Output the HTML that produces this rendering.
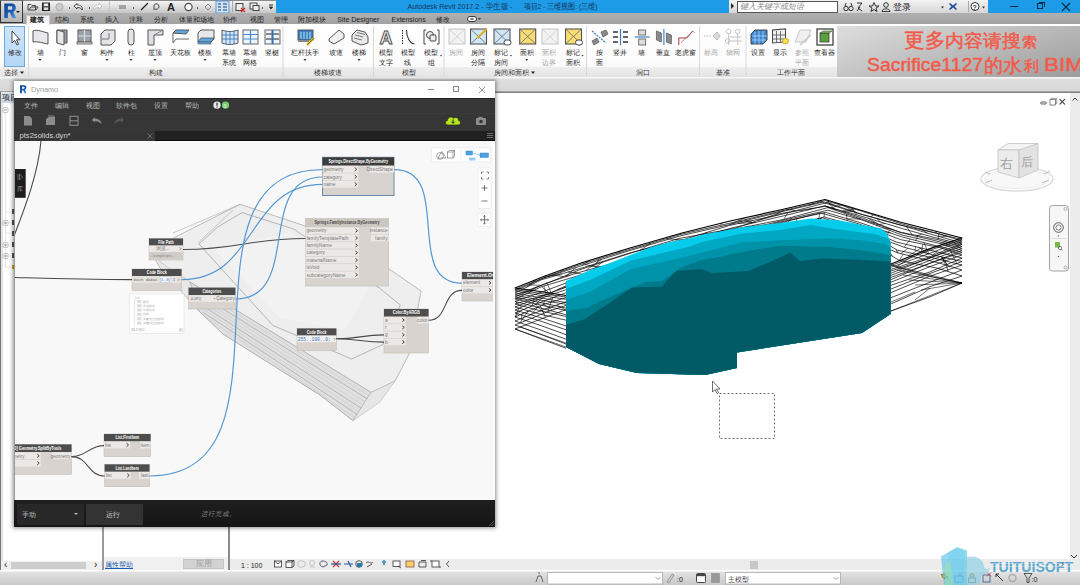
<!DOCTYPE html>
<html><head><meta charset="utf-8">
<style>
*{margin:0;padding:0;box-sizing:border-box}
html,body{width:1080px;height:585px;overflow:hidden;background:#fff;font-family:"Liberation Sans",sans-serif;color:#222}
.a{position:absolute}
.t{position:absolute;white-space:nowrap;line-height:1}
#qat{left:0;top:0;width:276px;height:13px;background:linear-gradient(#8a8a8a 0,#8a8a8a 1px,#f4f4f4 1px,#dedede 55%,#c6c6c6)}
#title{left:276px;top:0;width:804px;height:13px;background:#1e9be6}
#tabs{left:0;top:13px;width:1080px;height:11px;background:linear-gradient(#b0b0b0,#a2a2a2)}
#ribbon{left:0;top:24px;width:1080px;height:53px;background:linear-gradient(#ffffff,#fcfcfc 70%,#f4f4f4)}
#ptitle{left:0;top:67px;width:837px;height:10px;background:linear-gradient(#eeeeee,#e4e4e4)}
#strip{left:0;top:77px;width:1080px;height:16px;background:linear-gradient(#f7f7f7 0,#f7f7f7 1px,#dedede 2px,#d8d8d8 14px,#707070 15px,#909090 16px)}
#status{left:0;top:570px;width:1080px;height:15px;background:linear-gradient(#f0f0f0 0,#f0f0f0 1px,#d8d8d8 2px,#cdcdcd)}
.cjk{font-family:"Liberation Sans",sans-serif}
</style></head><body>
<div class="a" id="qat"></div>
<div class="a" id="title"></div>
<!-- QAT icons -->
<svg class="a" style="left:24px;top:0" width="252" height="13" viewBox="24 0 252 13">
 <g fill="none" stroke="#333" stroke-width="1">
  <path d="M28,4.5 L31,4.5 L32,5.5 L35.5,5.5 L35.5,10 L28,10 Z M29,10 L31,7 L38,7 L36,10" stroke="#444"/>
  <rect x="42.5" y="3" width="7" height="7.5" fill="#555" stroke="#222"/>
  <rect x="44" y="3.5" width="4" height="2.5" fill="#eee" stroke="none"/>
  <rect x="44" y="7.5" width="4" height="2.5" fill="#ddd" stroke="none"/>
  <circle cx="59.5" cy="7" r="3.6" fill="#ccc" stroke="#aaa"/>
  <path d="M69,8 L70,8" stroke="#333" stroke-width="1.4"/>
  <path d="M74,6 L77,3.5 L77,5 C81,5 83,7 82,10 C81,8 80,7.5 77,7.5 L77,9 Z" stroke="#333" fill="#fff" stroke-width="0.9"/>
  <path d="M89,8 L90,8" stroke="#333" stroke-width="1.4"/>
  <path d="M102,6 L99,3.5 L99,5 C95,5 93,7 94,10 C95,8 96,7.5 99,7.5 L99,9 Z" stroke="#bbb" fill="#fff" stroke-width="0.9"/>
  <path d="M109,8 L110,8" stroke="#555" stroke-width="1.4"/>
  <path d="M119,6 L126,6 M119,8 L126,8" stroke="#666" stroke-width="1.2"/>
  <path d="M133,8 L134,8" stroke="#333" stroke-width="1.4"/>
  <path d="M141,10 L148,3" stroke="#222" stroke-width="1.3"/>
  <path d="M154,10 L154,6 C154,3 159,3 159,6.5 C159,9 156,10 155,9" stroke="#444"/>
  <text x="167" y="11" font-family="Liberation Sans" font-weight="bold" font-size="11" fill="#222" stroke="none">A</text>
  <circle cx="188.5" cy="7" r="3.6" fill="#fff" stroke="#444" stroke-width="1.1"/>
  <path d="M197,8 L198,8" stroke="#333" stroke-width="1.4"/>
  <path d="M205,7 L208,4 L211,7 L208,10 Z" stroke="#888"/>
  <rect x="216" y="1" width="13" height="12" fill="#cfe3f7" stroke="#5a9ad8"/>
  <path d="M218,4 L221,4 M223,4 L227,4 M218,7 L221,7 M223,7 L227,7 M218,10 L221,10 M223,10 L227,10" stroke="#1f3f66" stroke-width="1.2"/>
  <rect x="236" y="3.5" width="7" height="7" fill="#eee" stroke="#444"/>
  <path d="M241,8 L245,12 M245,8 L241,12" stroke="#d22" stroke-width="1.2"/>
  <rect x="250" y="3" width="7" height="6" fill="#eee" stroke="#444"/>
  <rect x="253" y="5.5" width="6" height="5" fill="#eee" stroke="#444"/>
  <path d="M262,8 L263,8" stroke="#333" stroke-width="1.4"/>
  <path d="M269,5 L273,5 M269.5,7 L272.5,7 L271,9 Z" stroke="#333" fill="#333"/>
 </g>
</svg>
<div class="a" style="left:232px;top:1px;width:1px;height:11px;background:#aaa"></div>
<div class="a" style="left:109px;top:1px;width:1px;height:11px;background:#c8c8c8"></div>
<!-- title -->
<svg class="a" style="left:400px;top:0" width="200" height="13" viewBox="400 0 200 13"><g fill="#16355f" font-size="7.6" font-family="Liberation Sans"><text x="407.5" y="9.2" textLength="105" lengthAdjust="spacingAndGlyphs">Autodesk Revit 2017.2 - 学生版 -</text><text x="523.5" y="9.2" textLength="74" lengthAdjust="spacingAndGlyphs">项目2 - 三维视图: (三维)</text></g></svg>
<!-- search area -->
<div class="a" style="left:729px;top:0;width:259px;height:13px;background:linear-gradient(#f3f3f3,#d6d6d6)"></div>
<div class="a" style="left:731px;top:3px;width:0;height:0;border-top:3px solid transparent;border-bottom:3px solid transparent;border-left:3px solid #222"></div>
<div class="a" style="left:737px;top:1px;width:101px;height:11.5px;background:#fff;border:1px solid #555"></div>
<div class="t" style="left:740px;top:2.5px;font-size:8px;color:#888;font-style:italic">键入关键字或短语</div>
<svg class="a" style="left:840px;top:0" width="148" height="13" viewBox="840 0 148 13">
 <g fill="none" stroke="#333" stroke-width="1">
  <circle cx="846" cy="8.5" r="2.2"/><circle cx="851" cy="8.5" r="2.2"/><path d="M845,6 L846,3 M852,6 L851,3"/>
  <path d="M857,3 L862,3 L858,8 L862,11 M857,11 L860,7"/>
  <path d="M874,2.5 L875.5,6 L879,6 L876,8 L877,11.5 L874,9.5 L871,11.5 L872,8 L869,6 L872.5,6 Z"/>
  <circle cx="886" cy="5" r="2.3"/><path d="M882,11.5 C882,8 890,8 890,11.5 Z"/>
 </g>
 <text x="893" y="10" font-size="8.5" fill="#222" font-family="Liberation Sans">登录</text>
 <path d="M941,6.5 L944,6.5 L942.5,8.5 Z" fill="#333"/>
 <path d="M950,3 L953,5.5 L956,3 L957,4 L954.5,6.5 L957,9 L956,10 L953,7.5 L950,10 L949,9 L951.5,6.5 L949,4 Z" fill="#1c4f9c"/>
 <path d="M968.5,1 L968.5,12" stroke="#aaa"/>
 <circle cx="975" cy="6.5" r="4" fill="#fff" stroke="#333"/>
 <text x="972.5" y="9.5" font-size="7" font-weight="bold" fill="#333" font-family="Liberation Sans">?</text>
 <path d="M982,6.5 L985,6.5 L983.5,8.5 Z" fill="#333"/>
</svg>
<!-- window controls -->
<div class="a" style="left:1010px;top:6px;width:8px;height:1px;background:#0c2a44"></div>
<div class="a" style="left:1037px;top:3px;width:6px;height:6px;border:1px solid #0c2a44"></div>
<div class="a" style="left:1039px;top:2px;width:6px;height:5px;border-top:1px solid #0c2a44;border-right:1px solid #0c2a44"></div>
<svg class="a" style="left:1061px;top:2px" width="10" height="10"><path d="M1,1 L9,9 M9,1 L1,9" stroke="#0c2a44" stroke-width="1.1"/></svg>
<div class="a" id="tabs"></div>
<div class="a" style="left:26px;top:14.5px;width:24px;height:10.5px;background:linear-gradient(#eeeeee,#fdfdfd);border:1px solid #c4c4c4;border-bottom:none;z-index:2"></div>
<svg class="a" style="left:0;top:13px;z-index:3" width="500" height="12" viewBox="0 13 500 12">
<text x="37" y="22" font-size="7" fill="#1e1e1e" text-anchor="middle" font-weight="bold">建筑</text>
<text x="61.7" y="22" font-size="7" fill="#1e1e1e" text-anchor="middle">结构</text>
<text x="86.5" y="22" font-size="7" fill="#1e1e1e" text-anchor="middle">系统</text>
<text x="111.7" y="22" font-size="7" fill="#1e1e1e" text-anchor="middle">插入</text>
<text x="136" y="22" font-size="7" fill="#1e1e1e" text-anchor="middle">注释</text>
<text x="160.7" y="22" font-size="7" fill="#1e1e1e" text-anchor="middle">分析</text>
<text x="196" y="22" font-size="7" fill="#1e1e1e" text-anchor="middle">体量和场地</text>
<text x="229.5" y="22" font-size="7" fill="#1e1e1e" text-anchor="middle">协作</text>
<text x="256.5" y="22" font-size="7" fill="#1e1e1e" text-anchor="middle">视图</text>
<text x="280.7" y="22" font-size="7" fill="#1e1e1e" text-anchor="middle">管理</text>
<text x="312.2" y="22" font-size="7" fill="#1e1e1e" text-anchor="middle">附加模块</text>
<text x="358.3" y="22" font-size="7" fill="#1e1e1e" text-anchor="middle">Site Designer</text>
<text x="408.6" y="22" font-size="7" fill="#1e1e1e" text-anchor="middle">Extensions</text>
<text x="443.3" y="22" font-size="7" fill="#1e1e1e" text-anchor="middle">修改</text>
<rect x="467.5" y="16.5" width="9" height="5" rx="2.5" fill="#fff" stroke="#333"/><rect x="470.5" y="18.3" width="3" height="1.4" fill="#333"/><path d="M478,18 L481,18 L479.5,20 Z" fill="#333"/>
</svg>
<div class="a" id="ribbon"></div>
<div class="a" id="ptitle"></div>
<div class="a" style="left:4px;top:26px;width:21px;height:41px;background:linear-gradient(#cfe5fa,#b5d6f5);border:1px solid #6fa8dc"></div>
<svg class="a" style="left:0;top:24px" width="30" height="44" viewBox="0 24 30 44"><path d="M12,31 L12,43 L14.8,40.5 L17,45 L18.5,44.3 L16.5,39.8 L20,39.8 Z" fill="#fff" stroke="#333" stroke-width=".9"/><text x="14.5" y="55" font-size="7" fill="#333" text-anchor="middle">修改</text></svg>
<svg class="a" style="left:0;top:24px" width="840" height="53" viewBox="0 24 840 53">
<path d="M33,31 C37,29 43,32 48,33 L48,44 C43,43 37,41 33,42 Z" fill="#e8e8ea" stroke="#555" stroke-width="1"/>
<text x="40" y="55" font-size="7" fill="#282828" text-anchor="middle">墙</text>
<path d="M38.5,59 L41.5,59 L40,61 Z" fill="#333"/>
<path d="M57,30 L67,30 L67,43 L57,43 Z" fill="#9a9aa0" stroke="#555"/><path d="M57,30 L64,32 L64,45 L57,43 Z" fill="#e8e8ea" stroke="#555"/>
<text x="62" y="55" font-size="7" fill="#282828" text-anchor="middle">门</text>
<rect x="78" y="30" width="13" height="12" fill="#9aa2ae" stroke="#555"/><path d="M84.5,30 L84.5,42 M78,36 L91,36" stroke="#ddd" stroke-width="1.2"/><rect x="77" y="42" width="15" height="2" fill="#ddd" stroke="#555" stroke-width=".8"/>
<text x="84" y="55" font-size="7" fill="#282828" text-anchor="middle">窗</text>
<path d="M101,34 L105,30 L115,30 L115,41 L111,45 L101,45 Z" fill="#e4e4e8" stroke="#555"/><path d="M102,39 L109,39 L109,33" fill="none" stroke="#777"/>
<text x="107" y="55" font-size="7" fill="#282828" text-anchor="middle">构件</text>
<path d="M105.5,59 L108.5,59 L107,61 Z" fill="#333"/>
<rect x="128" y="29" width="6" height="16" rx="3" fill="#e4e4e8" stroke="#555"/>
<text x="131" y="55" font-size="7" fill="#282828" text-anchor="middle">柱</text>
<path d="M129.5,59 L132.5,59 L131,61 Z" fill="#333"/>
<path d="M148,30 L163,30 L163,35 L154,35 L154,45 L148,45 Z" fill="#e0e0e4" stroke="#555"/><path d="M163,30 L154,35" stroke="#888"/>
<text x="155" y="55" font-size="7" fill="#282828" text-anchor="middle">屋顶</text>
<path d="M153.5,59 L156.5,59 L155,61 Z" fill="#333"/>
<path d="M173,33 L176,30 L189,30 L186,34 Z" fill="#5aa9e6" stroke="#555"/><path d="M173,33 L173,43 M173,43 L176,39 L189,39" fill="none" stroke="#666"/>
<text x="180" y="55" font-size="7" fill="#282828" text-anchor="middle">天花板</text>
<path d="M198,33 L201,30 L214,30 L214,39 L211,42 L198,42 Z" fill="#e8e8ea" stroke="#555"/><path d="M198,42 L201,38 L214,38 L211,42 Z" fill="#5aa9e6" stroke="#555" stroke-width=".8"/><rect x="198" y="42" width="13" height="2" fill="#5aa9e6" stroke="#555" stroke-width=".6"/>
<text x="205" y="55" font-size="7" fill="#282828" text-anchor="middle">楼板</text>
<path d="M203.5,59 L206.5,59 L205,61 Z" fill="#333"/>
<path d="M222,30 C227,32 232,32 238,30 L238,43 C232,45 227,45 222,43 Z" fill="#d6e6f6" stroke="#555"/><path d="M226,31 L226,44 M230,31.5 L230,44.5 M234,31 L234,44 M222,35 L238,35 M222,39 L238,39" stroke="#2f6fb0" stroke-width=".8"/>
<text x="229" y="55" font-size="7" fill="#282828" text-anchor="middle">幕墙</text>
<text x="229" y="65" font-size="7" fill="#282828" text-anchor="middle">系统</text>
<rect x="243" y="30" width="15" height="14" fill="#eef4fa" stroke="#666"/><path d="M250.5,30 L250.5,44 M243,34.5 L258,34.5 M243,39 L258,39" stroke="#4a8ad0" stroke-width="1.2"/>
<text x="250" y="55" font-size="7" fill="#282828" text-anchor="middle">幕墙</text>
<text x="250" y="65" font-size="7" fill="#282828" text-anchor="middle">网格</text>
<rect x="265" y="30" width="15" height="14" fill="#eef4fa" stroke="#666"/><path d="M266,34 L279,34 M266,39 L279,39" stroke="#666" stroke-width="1.3"/><path d="M272.5,30 L272.5,44" stroke="#2f6fb0" stroke-width="2"/>
<text x="272" y="55" font-size="7" fill="#282828" text-anchor="middle">竖梃</text>
<rect x="298" y="30" width="15" height="10" fill="#3d80c8" stroke="#555"/><path d="M301,32 L301,39 M304,32 L304,39 M307,32 L307,39 M310,32 L310,39" stroke="#cfe" stroke-width=".8"/><path d="M307,45 L314,38" stroke="#e8c020" stroke-width="2.4"/><path d="M307,45 L314,38" stroke="#333" stroke-width=".6"/><rect x="298" y="40" width="11" height="2" fill="#888"/>
<text x="305" y="55" font-size="7" fill="#282828" text-anchor="middle">栏杆扶手</text>
<path d="M303.5,59 L306.5,59 L305,61 Z" fill="#333"/>
<path d="M329,39 L339,30 L344,34 L344,38 L334,44 L329,41 Z" fill="#f0f0f2" stroke="#555"/>
<text x="336" y="55" font-size="7" fill="#282828" text-anchor="middle">坡道</text>
<path d="M352,35 L357,30 L365,32 L368,37 L368,43 L361,45 L352,41 Z" fill="#eaeaea" stroke="#555"/><path d="M355,35 L363,37 M357,32.5 L365,34.5 M354,38 L362,40" stroke="#777"/>
<text x="359" y="55" font-size="7" fill="#282828" text-anchor="middle">楼梯</text>
<path d="M357.5,59 L360.5,59 L359,61 Z" fill="#333"/>
<text x="386" y="44" font-size="18" font-weight="bold" text-anchor="middle" fill="#f4f4f4" stroke="#444" stroke-width=".9">A</text>
<text x="386" y="55" font-size="7" fill="#282828" text-anchor="middle">模型</text>
<text x="386" y="65" font-size="7" fill="#282828" text-anchor="middle">文字</text>
<path d="M402.5,30 L402.5,44" stroke="#333" stroke-width="1" stroke-dasharray="1.5,1"/><path d="M406.5,30 C406.5,37 409.5,43 414.5,44" fill="none" stroke="#333" stroke-width="1.1"/>
<text x="407.5" y="55" font-size="7" fill="#282828" text-anchor="middle">模型</text>
<text x="407.5" y="65" font-size="7" fill="#282828" text-anchor="middle">线</text>
<path d="M426,30 L424,30 L424,44 L426,44 M437,30 L439,30 L439,44 L437,44" fill="none" stroke="#444"/><circle cx="430" cy="35" r="3.5" fill="#eee" stroke="#444"/><rect x="430" y="35" width="6" height="6" rx="1" fill="#eee" stroke="#444"/>
<text x="431" y="55" font-size="7" fill="#282828" text-anchor="middle">模型</text>
<text x="431" y="65" font-size="7" fill="#282828" text-anchor="middle">组</text>
<path d="M440,55 L442,55 L441,56.5 Z" fill="#333"/>
<rect x="449" y="29" width="16" height="15" fill="#f2f2f2" stroke="#c8c8c8" stroke-width="1.1"/><path d="M449,29 L465,44 M465,29 L449,44" stroke="#ccc" stroke-width=".8"/>
<text x="456" y="55" font-size="7" fill="#a8a8a8" text-anchor="middle">房间</text>
<rect x="470.5" y="29" width="16" height="15" fill="#cfe6f7" stroke="#555" stroke-width="1.1"/><path d="M470.5,29 L486.5,44 M486.5,29 L470.5,44" stroke="#666" stroke-width=".8"/><path d="M477.5,38 L486.5,29" stroke="#e0b020" stroke-width="2.2"/>
<text x="477.5" y="55" font-size="7" fill="#282828" text-anchor="middle">房间</text>
<text x="477.5" y="65" font-size="7" fill="#282828" text-anchor="middle">分隔</text>
<rect x="494" y="29" width="16" height="15" fill="#cfe6f7" stroke="#555" stroke-width="1.1"/><path d="M494,29 L510,44 M510,29 L494,44" stroke="#666" stroke-width=".8"/><rect x="504" y="40" width="7" height="5" rx="2.5" fill="#fff" stroke="#444"/>
<text x="501" y="55" font-size="7" fill="#282828" text-anchor="middle">标记</text>
<text x="501" y="65" font-size="7" fill="#282828" text-anchor="middle">房间</text>
<path d="M510,55 L512,55 L511,56.5 Z" fill="#333"/>
<rect x="519.7" y="29" width="16" height="15" fill="#f8dc74" stroke="#555" stroke-width="1.1"/><path d="M519.7,29 L535.7,44 M535.7,29 L519.7,44" stroke="#666" stroke-width=".8"/>
<text x="526.7" y="55" font-size="7" fill="#282828" text-anchor="middle">面积</text>
<path d="M525.2,59 L528.2,59 L526.7,61 Z" fill="#333"/>
<rect x="542" y="29" width="16" height="15" fill="#f2f2f2" stroke="#c8c8c8" stroke-width="1.1"/><path d="M542,29 L558,44 M558,29 L542,44" stroke="#ccc" stroke-width=".8"/>
<text x="549" y="55" font-size="7" fill="#a8a8a8" text-anchor="middle">面积</text>
<text x="549" y="65" font-size="7" fill="#a8a8a8" text-anchor="middle">边界</text>
<rect x="565.5" y="29" width="16" height="15" fill="#f8dc74" stroke="#555" stroke-width="1.1"/><path d="M565.5,29 L581.5,44 M581.5,29 L565.5,44" stroke="#666" stroke-width=".8"/><rect x="575.5" y="40" width="7" height="5" rx="2.5" fill="#fff" stroke="#444"/>
<text x="572.5" y="55" font-size="7" fill="#282828" text-anchor="middle">标记</text>
<text x="572.5" y="65" font-size="7" fill="#282828" text-anchor="middle">面积</text>
<path d="M581.5,55 L583.5,55 L582.5,56.5 Z" fill="#333"/>
<path d="M592,31 L606,43" stroke="#3a7cc0" stroke-width="1.2" stroke-dasharray="2,1"/><path d="M601,32 L606,30 L608,34 L603,37 Z M592,41 L597,38 L599,42 L594,45 Z" fill="#8a8a8e" stroke="#555" stroke-width=".7"/>
<text x="599" y="55" font-size="7" fill="#282828" text-anchor="middle">按</text>
<text x="599" y="65" font-size="7" fill="#282828" text-anchor="middle">面</text>
<path d="M620.5,29 L620.5,45" stroke="#3a7cc0" stroke-width="1.2"/><path d="M613,32 L618,32 M613,37 L618,37 M613,42 L618,42 M623,32 L628,32 M623,37 L628,37 M623,42 L628,42" stroke="#666" stroke-width="2.2"/>
<text x="620" y="55" font-size="7" fill="#282828" text-anchor="middle">竖井</text>
<rect x="638.7" y="30" width="7" height="5" fill="#ddd" stroke="#555" stroke-width=".8"/><rect x="638.7" y="39" width="7" height="6" fill="#ddd" stroke="#555" stroke-width=".8"/><path d="M634.7,37 L649.7,37" stroke="#3a7cc0" stroke-width="1.2"/>
<text x="641.7" y="55" font-size="7" fill="#282828" text-anchor="middle">墙</text>
<path d="M656.4,31 L661.4,33 L661.4,42 L656.4,40 Z M666.4,33 L671.4,35 L671.4,44 L666.4,42 Z" fill="#8a8a90" stroke="#555" stroke-width=".7"/><path d="M663.9,29 L663.9,45" stroke="#3a7cc0" stroke-width="1.1"/>
<text x="663.4" y="55" font-size="7" fill="#282828" text-anchor="middle">垂直</text>
<path d="M678.8,45 L678.8,38 L686.8,38 L692.8,31" fill="none" stroke="#c03030" stroke-width="1"/><path d="M680.8,43 L692.8,31 L694.8,33" fill="none" stroke="#777" stroke-width=".8"/>
<text x="685.8" y="55" font-size="7" fill="#282828" text-anchor="middle">老虎窗</text>
<path d="M704,36 L711,36" stroke="#bbb" stroke-dasharray="1.5,1"/><path d="M713,36 L717,32 L720,36 L717,40 Z" fill="#ddd" stroke="#bbb"/>
<text x="711" y="55" font-size="7" fill="#a8a8a8" text-anchor="middle">标高</text>
<circle cx="728.7" cy="31.5" r="2.3" fill="none" stroke="#c4c4c4"/><circle cx="737.7" cy="31.5" r="2.3" fill="none" stroke="#c4c4c4"/><circle cx="727.7" cy="41" r="2.3" fill="none" stroke="#c4c4c4"/><path d="M728.7,34 L728.7,45 M737.7,34 L737.7,45 M729.7,37 L741.7,37 M729.7,41 L741.7,41" stroke="#c4c4c4"/>
<text x="732.7" y="55" font-size="7" fill="#a8a8a8" text-anchor="middle">轴网</text>
<path d="M751,34 L755,30 L767,30 L767,40 L763,44 L751,44 Z" fill="#3d86d0" stroke="#444"/><path d="M755,32 L755,44 M759,31 L759,44 M763,31 L763,43 M752,36 L767,36 M752,40 L766,40" stroke="#bfe0ff" stroke-width=".7"/>
<text x="758" y="55" font-size="7" fill="#282828" text-anchor="middle">设置</text>
<rect x="772.5" y="30" width="13" height="13" fill="#f0f0f0" stroke="#444" transform="skewY(-5)" transform-origin="772.5 30"/><path d="M776.5,31 L776.5,43 M780.5,31 L780.5,43 M772.5,35 L785.5,35 M772.5,39 L785.5,39" stroke="#555" stroke-width=".8"/><circle cx="785.5" cy="41" r="3" fill="#f8e050" stroke="#a08020" stroke-width=".6"/>
<text x="779.5" y="55" font-size="7" fill="#282828" text-anchor="middle">显示</text>
<path d="M795,42 L800,30 L811,30 L806,42 Z" fill="#f0f0f0" stroke="#c8c8c8"/><path d="M800,45 L811,35" stroke="#c8c8c8" stroke-width="1.6"/>
<text x="802" y="55" font-size="7" fill="#a8a8a8" text-anchor="middle">参照</text>
<text x="802" y="65" font-size="7" fill="#a8a8a8" text-anchor="middle">平面</text>
<rect x="817" y="29" width="16" height="16" fill="#fff" stroke="#444" stroke-width="1.3"/><rect x="820" y="33" width="9" height="9" fill="#5aa040" stroke="#333" stroke-width=".7"/><path d="M820,33 L823,31 L832,31 L829,33 Z" fill="#8ac060" stroke="#333" stroke-width=".5"/>
<text x="824" y="55" font-size="7" fill="#282828" text-anchor="middle">查看器</text>
<path d="M28.5,26 L28.5,77" stroke="#d8d8d8" stroke-width="1"/>
<path d="M283,26 L283,77" stroke="#d8d8d8" stroke-width="1"/>
<path d="M373.5,26 L373.5,77" stroke="#d8d8d8" stroke-width="1"/>
<path d="M444,26 L444,77" stroke="#d8d8d8" stroke-width="1"/>
<path d="M586.5,26 L586.5,77" stroke="#d8d8d8" stroke-width="1"/>
<path d="M699.5,26 L699.5,77" stroke="#d8d8d8" stroke-width="1"/>
<path d="M746,26 L746,77" stroke="#d8d8d8" stroke-width="1"/>
<text x="10.5" y="75" font-size="7" fill="#333" text-anchor="middle">选择</text>
<text x="156" y="75" font-size="7" fill="#333" text-anchor="middle">构建</text>
<text x="328" y="75" font-size="7" fill="#333" text-anchor="middle">楼梯坡道</text>
<text x="409" y="75" font-size="7" fill="#333" text-anchor="middle">模型</text>
<text x="511" y="75" font-size="7" fill="#333" text-anchor="middle">房间和面积</text>
<text x="643" y="75" font-size="7" fill="#333" text-anchor="middle">洞口</text>
<text x="723" y="75" font-size="7" fill="#333" text-anchor="middle">基准</text>
<text x="791" y="75" font-size="7" fill="#333" text-anchor="middle">工作平面</text>
<path d="M20,71.5 L24,71.5 L22,74 Z" fill="#222"/><path d="M531,71.5 L535,71.5 L533,74 Z" fill="#222"/>
</svg>
<div class="a" style="left:837px;top:26px;width:243px;height:51px;background:linear-gradient(100deg,#d8d8d8 0%,#c4c4c4 40%,#a9a9a9 100%)"></div>
<div class="a" style="left:837px;top:26px;width:243px;height:51px;background:linear-gradient(rgba(255,255,255,.15),rgba(0,0,0,.08))"></div>
<svg class="a" style="left:837px;top:24px" width="243" height="53" viewBox="837 24 243 53"><g fill="#f25a4a" stroke="#f25a4a" stroke-width=".45" font-family="Liberation Sans"><text x="904" y="46.5" font-size="20" textLength="41" lengthAdjust="spacingAndGlyphs">更多</text><text x="945" y="47" font-size="17.5" textLength="76" lengthAdjust="spacingAndGlyphs">内容请搜</text><text x="1022" y="46.5" font-size="14" textLength="15" lengthAdjust="spacingAndGlyphs">索</text><text x="867" y="71" font-size="17.5" textLength="116" lengthAdjust="spacingAndGlyphs">Sacrifice1127</text><text x="984" y="72" font-size="18.5" textLength="38" lengthAdjust="spacingAndGlyphs">的水</text><text x="1024" y="71" font-size="15" textLength="15" lengthAdjust="spacingAndGlyphs">利</text><text x="1044" y="71" font-size="18.5" textLength="40" lengthAdjust="spacingAndGlyphs">BIM</text></g></svg>
<div class="a" id="strip"></div>
<div class="a" style="left:0;top:0;width:23px;height:23px;background:linear-gradient(#e2e2e2,#b4b4b4);border:1px solid #333;border-top-color:#777;z-index:5"></div>
<svg class="a" style="left:0;top:0;z-index:6" width="23" height="23"><defs><linearGradient id="rg" x1="0" y1="0" x2="1" y2="1"><stop offset="0" stop-color="#0d3f8f"/><stop offset=".6" stop-color="#1f62b8"/><stop offset="1" stop-color="#5aa8e8"/></linearGradient></defs><path fill-rule="evenodd" fill="url(#rg)" d="M4.3,3.5 L11.5,3.5 C14.8,3.5 15.8,5.6 15.8,7.8 C15.8,10 14.8,11.3 13.2,11.9 L16.3,18 L12.4,18 L9.9,12.6 L7.9,12.6 L7.9,18 L4.3,18 Z M7.9,6.3 L11,6.3 C12,6.3 12.3,7 12.3,7.9 C12.3,8.8 12,9.7 11,9.7 L7.9,9.7 Z"/></svg>
<div class="a" style="left:16px;top:11px;width:0;height:0;border-left:2px solid transparent;border-right:2px solid transparent;border-top:2.5px solid #111;z-index:6"></div>
<!-- project browser -->
<div class="a" style="left:0;top:92px;width:103px;height:11px;background:linear-gradient(#dde6f0,#c9d6e6)"></div>
<div class="a" style="left:0;top:92px;width:1px;height:478px;background:#777"></div>
<div class="t" style="left:2px;top:93.5px;font-size:8px;color:#222">项目</div>
<div class="a" style="left:1px;top:103px;width:2px;height:458px;background:#e4e4e4"></div>
<svg class="a" style="left:0;top:100px" width="16" height="180" viewBox="0 100 16 180">
 <g fill="#fff" stroke="#999" stroke-width=".6">
  <rect x="3" y="107.5" width="5" height="5" rx="1.2"/><rect x="3" y="220.5" width="5" height="5" rx="1.2"/><rect x="3" y="242.5" width="5" height="5" rx="1.2"/><rect x="3" y="253.5" width="5" height="5" rx="1.2"/>
 </g>
 <path d="M4,110 L7,110 M4,223 L7,223 M5.5,221.5 L5.5,224.5 M4,245 L7,245 M5.5,243.5 L5.5,246.5 M4,256 L7,256 M5.5,254.5 L5.5,257.5" stroke="#555" stroke-width=".6"/>
 <path d="M5.5,113 L5.5,268 M8,223 L11,223 M8,245 L11,245 M8,256 L11,256 M5.5,212 L11,212 M5.5,233 L11,233 M5.5,267 L11,267" stroke="#ccc" stroke-width=".5" fill="none"/>
 <g fill="#555"><rect x="12" y="209" width="3" height="5"/><rect x="12" y="220" width="3" height="5"/><rect x="12" y="231" width="3" height="5"/><rect x="12" y="242" width="3" height="5"/><rect x="12" y="253" width="3" height="5"/></g>
 <rect x="12" y="265" width="3" height="4" fill="#d8a020"/>
</svg>
<div class="a" style="left:102px;top:92px;width:2px;height:478px;background:#9a9a9a"></div>
<div class="a" style="left:228px;top:92px;width:2px;height:478px;background:#8a8a8a"></div>
<!-- browser hscroll -->
<div class="a" style="left:1px;top:561px;width:101px;height:9px;background:#f0f0f0"></div>
<div class="a" style="left:11px;top:562px;width:75px;height:7px;background:#cdcdcd"></div>
<div class="t" style="left:4px;top:560px;font-size:10px;color:#222">&lsaquo;</div>
<div class="t" style="left:94px;top:560px;font-size:10px;color:#222">&rsaquo;</div>
<!-- properties bottom -->
<div class="a" style="left:104px;top:557px;width:124px;height:13px;background:#f0f0f0"></div>
<div class="t" style="left:105px;top:561px;font-size:7px;color:#1a5fb4;text-decoration:underline">属性帮助</div>
<div class="a" style="left:183px;top:559px;width:41px;height:10px;background:#d2d2d2;border:1px solid #c4c4c4"></div>
<div class="t" style="left:196px;top:560px;font-size:8px;color:#9a9a9a">应用</div>
<!-- view bottom bar -->
<div class="a" style="left:230px;top:559px;width:840px;height:11px;background:#ececec"></div>
<div class="a" style="left:1070px;top:93px;width:10px;height:477px;background:#ececec"></div>
<div class="a" style="left:750px;top:561px;width:8px;height:8px;background:#c8c8c8"></div>
<svg class="a" style="left:0;top:0" width="1080" height="585" viewBox="0 0 1080 585">
<g fill="none" stroke="#000" stroke-linejoin="round"><path d="M566.0,295.5 L540.0,291.5 L515.0,288.0 L545.0,276.0 L581.0,263.0 L630.0,248.0 L682.0,233.0 L730.0,221.0 L780.0,210.0 L825.0,199.5 L860.0,210.0 L900.0,222.0 L935.0,231.0 L962.0,238.0 L930.0,248.6 L891.0,264.0" stroke-width="1.2"/><path d="M566.0,297.0 L540.0,293.4 L515.0,289.5 L544.0,277.7 L580.0,264.6 L631.0,249.1 L681.2,234.3 L731.0,222.9 L781.2,211.0 L825.5,200.7 L861.2,211.0 L901.2,223.7 L934.5,232.8 L962.0,239.5 L930.0,250.2 L891.0,265.6" stroke-width="0.7"/><path d="M566.0,299.3 L540.0,295.3 L515.0,291.0 L542.7,278.4 L581.5,265.7 L630.9,250.2 L681.0,235.7 L729.9,224.5 L779.9,212.1 L822.6,202.2 L857.5,213.2 L901.8,225.4 L936.5,233.2 L962.0,241.0 L930.0,253.3 L891.0,267.3" stroke-width="0.7"/><path d="M566.0,302.6 L540.0,297.7 L515.0,293.0 L541.4,279.8 L584.6,267.2 L632.0,252.3 L685.5,239.0 L728.8,225.6 L782.2,214.1 L827.0,202.6 L862.9,214.7 L903.6,225.9 L933.7,235.0 L962.0,243.0 L930.0,256.7 L891.0,269.4" stroke-width="0.7"/><path d="M566.0,304.3 L540.0,300.1 L515.0,295.0 L549.2,282.5 L579.1,270.0 L626.8,254.3 L678.5,238.6 L735.0,228.3 L775.5,214.4 L825.3,206.3 L857.4,215.0 L903.3,228.9 L934.2,237.4 L962.0,244.5 L930.0,258.2 L891.0,271.0" stroke-width="0.7"/><path d="M566.0,308.0 L540.0,302.5 L515.0,297.0 L544.9,283.6 L577.3,272.9 L634.5,257.6 L684.9,242.2 L729.3,228.6 L783.4,215.9 L824.5,205.8 L863.5,218.4 L899.5,232.0 L937.3,239.5 L962.0,246.5 L930.0,257.7 L891.0,273.2" stroke-width="0.7"/><path d="M566.0,310.4 L540.0,304.9 L515.0,299.0 L541.5,286.7 L585.9,273.5 L631.3,260.2 L680.4,243.8 L727.7,230.5 L783.7,219.4 L827.9,207.6 L861.9,219.3 L902.6,233.1 L937.0,241.1 L962.0,248.5 L930.0,260.4 L891.0,275.3" stroke-width="0.7"/><path d="M566.0,314.8 L540.0,307.8 L515.0,301.5 L546.9,290.2 L585.5,275.7 L630.8,261.7 L682.5,244.7 L731.7,233.3 L783.2,220.3 L828.0,210.2 L861.4,219.8 L903.3,235.4 L938.4,243.1 L962.0,250.5 L930.0,263.3 L891.0,277.4" stroke-width="0.7"/><path d="M566.0,316.5 L540.0,310.7 L515.0,304.0 L549.6,293.3 L581.3,278.8 L633.4,262.6 L681.8,249.8 L732.2,236.9 L776.7,222.8 L825.8,212.4 L859.2,222.4 L902.7,237.1 L937.2,246.0 L962.0,252.5 L930.0,263.1 L891.0,279.6" stroke-width="0.7"/><path d="M566.0,320.2 L540.0,314.1 L515.0,307.0 L546.5,294.6 L582.9,280.8 L625.4,266.8 L679.3,251.2 L726.3,237.8 L776.8,223.8 L820.4,212.8 L858.8,223.9 L900.9,239.7 L939.0,247.4 L962.0,255.0 L930.0,266.6 L891.0,282.2" stroke-width="0.7"/><path d="M566.0,325.9 L540.0,317.5 L515.0,310.0 L544.1,297.2 L584.3,283.5 L625.4,269.1 L677.9,254.6 L728.4,242.2 L784.6,227.0 L824.2,217.0 L861.4,227.4 L896.4,242.0 L935.6,251.5 L962.0,258.0 L930.0,271.9 L891.0,285.3" stroke-width="0.7"/><path d="M566.0,329.8 L540.0,320.9 L515.0,313.0 L543.5,301.2 L576.0,288.9 L630.7,271.4 L678.4,257.8 L733.9,245.7 L779.3,229.0 L822.9,217.9 L858.8,230.5 L904.1,247.2 L932.6,254.9 L962.0,261.5 L930.0,273.5 L891.0,289.0" stroke-width="0.7"/><path d="M566.0,334.6 L540.0,325.3 L515.0,317.0 L543.2,304.6 L580.9,293.1 L629.8,275.8 L683.2,260.1 L727.9,248.9 L783.3,233.2 L825.3,220.2 L864.4,231.4 L897.5,250.2 L931.5,257.5 L962.0,265.0 L930.0,276.2 L891.0,292.6" stroke-width="0.7"/><path d="M566.0,339.2 L540.0,329.7 L515.0,321.0 L544.7,309.2 L582.0,296.3 L626.2,281.5 L680.0,266.4 L728.4,253.6 L780.3,235.4 L823.6,225.3 L860.9,236.6 L897.5,252.8 L939.2,263.0 L962.0,270.0 L930.0,282.2 L891.0,297.7" stroke-width="0.7"/><path d="M566.0,344.0 L540.0,334.1 L515.0,325.0 L547.8,311.6 L581.8,300.0 L631.3,285.9 L686.1,270.3 L728.9,258.1 L777.0,241.1 L828.3,229.0 L863.4,238.9 L899.3,260.4 L937.8,268.3 L962.0,276.0 L930.0,286.6 L891.0,303.9" stroke-width="0.7"/><path d="M566.0,348.3 L540.0,338.5 L515.0,329.0 L545.5,317.3 L579.3,304.7 L630.9,289.1 L677.7,276.4 L733.2,263.0 L781.6,245.4 L827.2,232.9 L865.0,246.6 L895.5,266.9 L932.2,276.7 L962.0,283.0 L930.0,296.8 L891.0,311.0" stroke-width="0.7"/><path d="M717.6,249.3 L712.6,252.8 M602.0,259.3 L585.5,270.7 M532.5,300.1 L534.9,301.2 M681.6,257.1 L688.5,258.8 M908.0,248.2 L900.8,253.6 M918.0,235.7 L915.6,240.5 M519.0,308.2 L515.0,317.0 M950.7,251.2 L957.0,263.8 M910.3,239.1 L904.1,247.2 M707.9,232.1 L694.8,239.2 M853.4,211.5 L843.3,211.9 M942.6,257.2 L943.7,260.5 M563.2,269.4 L560.9,271.6 M860.7,218.9 L847.5,218.9 M890.8,233.1 L874.3,229.7 M956.8,239.4 L961.8,244.5 M854.8,209.1 L842.4,210.9 M768.5,226.1 L764.2,234.5 M766.5,226.6 L766.6,237.9 M941.3,256.9 L948.3,265.8 M862.2,237.1 L878.1,255.3 M603.4,261.3 L589.2,272.6 M640.2,245.1 L640.4,246.3 M731.7,233.3 L728.4,242.2 M749.8,231.2 L740.5,243.3 M585.1,264.6 L598.3,267.3 M606.4,288.1 L591.7,301.0 M712.5,257.8 L698.9,266.7 M745.8,217.5 L729.9,224.5 M841.5,204.5 L856.7,212.6 M745.6,219.4 L752.4,222.3 M520.7,310.6 L515.0,317.0 M568.1,272.0 L583.5,274.2 M941.8,257.0 L945.7,265.0 M830.6,207.7 L824.5,205.8 M533.8,301.7 L531.8,306.0 M827.3,206.8 L835.6,209.4 M515.9,298.6 L524.6,298.1 M912.1,256.3 L896.4,267.1 M828.8,201.7 L825.0,203.0 M937.0,251.8 L932.6,254.9 M722.0,223.0 L720.6,225.3 M542.6,297.8 L535.1,304.7 M944.4,257.6 L948.1,271.6 M547.2,276.6 L561.9,273.8 M576.0,267.5 L565.3,276.9 M874.3,214.3 L870.6,216.8 M885.0,243.1 L892.3,256.2 M860.1,230.1 L863.4,238.9 M597.5,273.7 L582.9,280.8 M796.4,229.1 L777.8,240.9 M666.0,238.8 L682.1,239.9 M640.3,262.5 L644.2,271.6 M674.6,241.7 L678.5,238.6 M815.3,203.1 L808.7,205.5 M540.3,305.9 L545.5,317.3 M898.4,250.4 L897.5,252.8 M535.8,304.4 L544.1,313.1 M803.5,209.8 L800.7,211.7 M591.6,265.9 L600.4,266.7 M565.4,275.7 L568.7,275.8 M546.8,275.3 L544.0,277.7 M727.1,229.3 L731.7,233.3 M787.8,212.6 L783.7,219.4 M610.7,263.9 L624.3,262.3 M707.8,251.4 L695.2,257.1 M850.4,227.6 L853.1,228.2 M745.5,227.0 L765.1,224.8 M790.9,218.5 L784.6,227.0 M878.0,234.3 L879.9,238.3 M620.9,250.8 L618.2,253.0 M516.0,287.6 L517.7,288.4 M751.9,228.2 L737.7,239.7 M710.3,232.8 L704.8,236.1 M747.4,243.4 L736.2,250.9 M915.8,246.7 L914.8,250.1 M835.9,206.4 L829.0,203.2 M723.0,231.9 L715.0,237.2 M852.0,227.8 L862.4,238.6 M645.7,261.0 L625.4,269.1 M924.1,242.7 L928.9,253.9 M935.7,231.2 L936.5,233.2 M846.5,214.0 L847.2,220.6 M889.5,230.2 L885.9,237.6 M781.0,233.8 L756.5,248.3 M645.0,271.4 L630.9,289.1 M920.5,229.0 L927.3,233.1 M732.2,246.1 L708.1,259.0 M544.7,300.7 L543.2,304.6 M922.2,234.1 L915.6,236.1 M557.2,289.8 L569.0,286.1 M824.3,212.7 L824.2,217.0 M950.2,245.0 L945.4,245.3 M750.1,236.3 L732.2,252.3 M745.2,241.5 L728.9,258.1 M723.5,230.4 L702.1,237.7 M947.1,236.4 L938.3,236.3 M918.6,247.3 L927.8,253.6 M797.2,218.5 L794.9,225.0 M648.0,258.7 L636.7,269.7 M600.8,274.9 L583.7,286.4 M885.1,223.4 L876.1,225.2 M906.7,226.8 L912.1,234.5 M546.9,282.9 L551.1,292.6 M556.6,305.1 L565.7,309.8 M672.3,256.2 L682.5,260.4 M543.3,304.5 L552.5,310.0 M738.6,221.1 L742.1,221.5 M851.8,208.3 L857.0,214.9 M896.0,249.4 L897.5,252.8 M733.7,251.8 L728.9,258.1 M738.1,223.6 L755.6,222.4 M649.9,265.9 L653.2,268.9 M585.0,273.8 L585.5,275.7 M528.7,284.8 L540.9,285.4 M850.2,227.5 L861.9,230.7 M573.4,272.4 L577.3,272.9 M678.9,261.4 L669.4,278.6 M953.6,242.4 L960.2,248.0 M698.5,245.7 L716.4,245.2 M783.5,210.5 L775.5,214.4 M954.1,240.8 L948.1,242.6 M840.9,205.2 L831.0,207.8 M631.1,280.1 L630.9,289.1 M538.1,306.8 L530.8,314.8 M522.1,313.9 L521.5,318.4 M543.8,286.0 L546.5,294.6 M528.3,311.1 L519.6,323.1 M947.3,240.7 L940.5,243.8 M876.7,218.5 L880.8,222.1 M921.4,248.0 L908.5,255.5 M816.6,201.5 L822.6,202.2 M541.4,286.7 L549.6,293.3 M719.6,231.6 L714.4,234.3 M650.8,243.3 L639.9,250.3 M744.2,221.0 L752.0,222.5 M828.2,201.5 L830.5,204.7 M590.6,260.1 L581.5,265.7 M759.5,242.7 L748.1,257.6 M778.9,214.8 L757.8,220.5 M553.0,275.0 L563.3,276.6 M642.2,255.2 L639.4,258.8 M552.7,297.7 L547.8,311.6 M697.8,238.9 L699.5,245.2 M677.4,251.7 L663.0,262.2 M536.9,279.2 L526.6,287.2 M515.3,301.4 L521.5,307.1 M891.1,229.2 L882.6,227.7 M868.3,218.3 L877.7,223.7 M874.2,222.5 L872.4,222.9 M760.3,233.5 L751.6,239.2 M819.8,212.9 L818.2,222.4 M938.5,233.8 L938.2,239.8 M886.9,240.8 L874.2,237.0 M875.5,227.9 L871.9,231.8 M566.0,283.0 L566.4,287.1 M828.5,203.1 L835.9,210.4 M599.1,258.8 L596.3,263.5 M852.8,234.1 L864.1,246.2 M536.4,287.2 L529.2,292.4 M707.8,247.3 L727.9,247.0 M903.2,254.2 L899.3,260.4 M864.4,232.6 L864.1,238.0 M847.1,226.4 L856.1,236.8 M785.3,208.8 L795.4,210.7 M922.9,244.1 L921.4,251.9 M566.9,292.4 L573.1,295.5 M835.6,202.7 L837.0,204.0 M579.9,279.4 L576.0,288.9 M813.1,208.3 L806.5,210.3 M962,283 L891.0,265.0 M962,283 L897.0,270.0 M962,283 L903.0,275.0 M962,283 L909.0,280.0 M962,283 L915.0,285.0 M962,283 L921.0,290.0 M962,283 L891,311 M915,292 L891,302 M930,288 L915,300 M515,329 L566,347 M520,327 L566,343" stroke-width="0.55"/></g>
<path fill="#06ccec" d="M566,281 L590,270 L610,263 L631,254.7 L651.5,247 L672,241.4 L690,238.3 L701,235 L742,227.3 L780,223 L811,218.4 L840,220.5 L863,225 L881,228.3 L887.3,234 L890.6,243 L890.6,314 L874,325 L862,333 L737,352.4 L737,368 L705,375 L637,373 L599,364 L566,347 Z"/>
<g clip-path="url(#tealclip)">
<path fill="#00a8c4" d="M560,291 L590,280 L631,260.4 L690,246.5 L701,242.3 L742,233.4 L780,230 L811,225 L830,228.3 L874,234 L887.8,238.3 L895,246 L895,400 L560,400 Z"/>
<path fill="#0092a9" d="M560,301.8 L590.8,291.5 L631,269 L690,255.8 L742,242.3 L780,240.3 L830,238.3 L863,240.5 L885.5,244 L895,251.7 L895,400 L560,400 Z"/>
<path fill="#007b8c" d="M560,312 L586.7,308 L601,300.8 L627.7,289.5 L646,282 L662,281 L680,268 L701,260 L714.6,258 L742,252 L780,245.7 L830,247 L863,250.5 L895,256 L895,400 L560,400 Z"/>
<path fill="#005b67" d="M560,326.4 L584.6,319.2 L611.3,301.8 L631.8,287.4 L662.6,286.4 L666.8,280.6 L676.4,271 L701,269 L712,273 L748.8,271 L780,257.4 L790,252.6 L800,261 L822.6,258.4 L852,259.4 L895,261.7 L895,400 L560,400 Z"/>
</g>
<defs><clipPath id="tealclip"><path d="M566,281 L590,270 L610,263 L631,254.7 L651.5,247 L672,241.4 L690,238.3 L701,235 L742,227.3 L780,223 L811,218.4 L840,220.5 L863,225 L881,228.3 L887.3,234 L890.6,243 L890.6,314 L874,325 L862,333 L737,352.4 L737,368 L705,375 L637,373 L599,364 L566,347 Z"/></clipPath></defs>
<!-- cursor -->
<path d="M712.5,381 L712.5,392 L715,389.5 L717,393.5 L718.5,392.8 L716.5,389 L720,389 Z" fill="#fff" stroke="#333" stroke-width="0.7"/>
<rect x="719.5" y="393.5" width="55" height="45" fill="none" stroke="#777" stroke-width="1" stroke-dasharray="2,2"/>
</svg>
<!-- view top-right controls -->
<svg class="a" style="left:1030px;top:96px" width="50" height="14" viewBox="1030 96 50 14">
 <rect x="1040.5" y="101.8" width="6" height="2.4" rx="1.2" fill="#bbb" stroke="#555" stroke-width=".6"/>
 <rect x="1050" y="99.5" width="5.5" height="5.5" fill="#fff" stroke="#555" stroke-width=".7"/><path d="M1051.5,99.5 L1051.5,98.3 L1056.8,98.3 L1056.8,103.5 L1055.5,103.5" fill="none" stroke="#555" stroke-width=".6"/>
 <path d="M1059.5,99 L1065,104.5 M1065,99 L1059.5,104.5" stroke="#555" stroke-width="1.1"/>
 <path d="M1072.5,100.5 L1075,98 L1077.5,100.5" fill="none" stroke="#333" stroke-width="1"/>
</svg>
<!-- view cube -->
<svg class="a" style="left:975px;top:135px" width="90" height="60" viewBox="975 135 90 60">
 <ellipse cx="1017" cy="179" rx="36" ry="12" fill="none" stroke="#dedede" stroke-width="1.6"/>
 <ellipse cx="1017" cy="179" rx="32" ry="9.5" fill="#f8f8f8" stroke="#ececec" stroke-width="1"/>
 <path d="M998,150 L1008,143.5 L1038,143.5 L1027,150 Z" fill="#f4f4f4" stroke="#bbb" stroke-width=".7"/>
 <path d="M998,150 L1019,150 L1019,178 L998,172 Z" fill="#ececec" stroke="#bbb" stroke-width=".7"/>
 <path d="M1019,150 L1038,143.5 L1038,170 L1019,178 Z" fill="#e2e2e2" stroke="#bbb" stroke-width=".7"/>
 <text x="999.5" y="168" font-size="13" fill="#a0a0a0" font-family="Liberation Serif">右</text>
 <text x="1021" y="166" font-size="12" fill="#a0a0a0" font-family="Liberation Serif">后</text>
 <path d="M985,183 L992,180 M1042,183 L1049,180 M985,172 L990,174 M1044,174 L1050,171" stroke="#bbb" stroke-width="1"/>
</svg>
<!-- nav bar -->
<svg class="a" style="left:1047px;top:203px" width="24" height="71" viewBox="1047 203 24 71">
 <rect x="1049.5" y="205.5" width="19" height="65.5" rx="3" fill="#f6f6f6" stroke="#9a9a9a" stroke-width=".9"/>
 <circle cx="1065.5" cy="209" r="1.5" fill="none" stroke="#999" stroke-width=".7"/>
 <circle cx="1065.5" cy="267.5" r="1.5" fill="none" stroke="#999" stroke-width=".7"/>
 <circle cx="1058.5" cy="227.5" r="4.8" fill="#fff" stroke="#555" stroke-width="1"/><circle cx="1058.5" cy="227.5" r="2.6" fill="none" stroke="#555" stroke-width=".8"/>
 <path d="M1057.5,235.5 L1059.5,235.5 L1058.5,236.8 Z" fill="#555"/>
 <path d="M1051.5,238.5 L1066,238.5" stroke="#ccc" stroke-width=".6"/>
 <rect x="1055" y="242" width="5" height="5.5" fill="#7ab84a"/><circle cx="1060" cy="248" r="1.7" fill="none" stroke="#444" stroke-width=".6"/><path d="M1061.2,249.2 L1062.5,250.5" stroke="#444" stroke-width=".7"/>
 <path d="M1057.5,256 L1059.5,256 L1058.5,257.3 Z" fill="#555"/>
</svg>
<!-- view bottom toolbar -->
<div class="t" style="left:241px;top:561.5px;font-size:7px;color:#222">1&nbsp;:&nbsp;100</div>
<svg class="a" style="left:270px;top:558px" width="190" height="13" viewBox="270 558 190 13">
 <g fill="none" stroke="#333" stroke-width=".8">
 <rect x="274.5" y="561" width="7" height="6" fill="#fff"/><path d="M274.5,561 L278,564 L281.5,561"/>
 <rect x="286" y="562" width="6" height="5.5" fill="#fff"/><path d="M286,562 L288,560.5 L294,560.5 L294,566 L292,567.5 M292,562 L294,560.5"/>
 <path d="M298,562 L301,560.5 L305,562 L305,566 L301,567.5 L298,566 Z" stroke="#bbb"/>
 <circle cx="312" cy="563" r="2.5" stroke="#bbb"/><path d="M310,567 L315,567" stroke="#bbb"/>
 <path d="M322,561 C319,562 319,566 323,567 L327,565 C328,563 326,561 322,561" stroke="#335"/>
 <path d="M333,561 L339,567 M339,561 L333,567" stroke="#c33" stroke-width="1.1"/><path d="M331,564 L341,564" stroke="#2a5aa0" stroke-width="1.3"/>
 <path d="M344,564 L353,564 M348,561 L351,567" stroke="#2a5aa0" stroke-width="1.2"/>
 <circle cx="359" cy="564" r="3.3"/><rect x="357" y="563" width="5" height="4" fill="#2a7ab0" stroke="none"/>
 <path d="M366,563 C368,560 371,565 373,562 M367,567 L372,564"/>
 <path d="M384,561 L384,565" stroke="#2a7ab0" stroke-width="1.2"/><circle cx="384" cy="562" r="1.5" stroke="#2a7ab0"/>
 <rect x="393" y="561" width="7" height="5.5" fill="#fff"/><path d="M398,566 L401,568"/>
 <rect x="406" y="561" width="8" height="6" fill="#f8d060" stroke="#855"/>
 <path d="M419,562 L426,562 L426,567 L419,567 Z M421,560.5 L426,560.5"/>
 <rect x="432" y="561" width="7" height="6" fill="#fff"/><path d="M430,561 L432,561 M439,567 L441,567"/>
 <path d="M449,561 L446.5,564 L449,567"/>
 </g>
</svg>
<!-- status bar -->
<div class="a" style="left:0;top:570px;width:1080px;height:15px;background:linear-gradient(#ffffff 0,#ffffff 1px,#e2e2e2 2px,#d6d6d6 8px,#c9c9c9 15px)"></div>
<svg class="a" style="left:530px;top:570px" width="550" height="15" viewBox="530 570 550 15">
 <path d="M536,582 L538,576 L541,576 L543,582 M539,574 L539,572" fill="none" stroke="#555" stroke-width=".9"/>
 <rect x="547.5" y="572.5" width="115" height="11.5" fill="#fff" stroke="#aaa" stroke-width=".8"/>
 <path d="M655.5,577 L658,579.5 L660.5,577" fill="none" stroke="#888" stroke-width=".8"/>
 <path d="M667,582 L672,574 L674,575 L669,583 Z" fill="#ccc" stroke="#777" stroke-width=".6"/>
 <text x="677" y="581.5" font-size="7" fill="#222" font-family="Liberation Sans">:0</text>
 <rect x="696.5" y="573.5" width="9" height="9" rx="1" fill="#fff" stroke="#333" stroke-width=".9"/><rect x="697" y="574" width="8" height="2.2" fill="#444"/>
 <rect x="711.5" y="573.5" width="8" height="9" fill="#999" stroke="#888" stroke-width=".5"/>
 <rect x="725.5" y="572.5" width="115" height="11.5" fill="#fff" stroke="#aaa" stroke-width=".8"/>
 <text x="727.5" y="581.5" font-size="7" fill="#444" font-family="Liberation Sans">主模型</text>
 <path d="M833.5,577 L836,579.5 L838.5,577" fill="none" stroke="#888" stroke-width=".8"/>
 <g fill="none" stroke="#555" stroke-width=".8">
  <path d="M941,574 L945,579 L947,576 L950,582" stroke="#333"/><circle cx="944" cy="576" r="2" fill="#e8b830" stroke="#a07010"/>
  <rect x="955" y="576" width="8" height="6" stroke="#2a5aa0"/><path d="M958,573 L962,577 M962,573 L958,577" stroke="#c33"/>
  <circle cx="972" cy="575.5" r="2" fill="#e8a840"/><rect x="968.5" y="578" width="7" height="4.5" stroke="#444"/>
  <rect x="983" y="575" width="7" height="7" stroke="#2a5aa0"/><path d="M987,572.5 L991,576.5 M991,572.5 L987,576.5" stroke="#c33"/>
  <path d="M996,574 L1003,581 M999,574 L996,574 L996,577" stroke="#333" stroke-width="1"/>
  <circle cx="1012.5" cy="578" r="3.5" stroke="#aaa" stroke-width="1.4"/>
  <path d="M1024,573.5 L1032,573.5 L1029,578 L1029,582.5 L1027,582.5 L1027,578 Z" stroke="#333"/>
 </g>
 <text x="1031.5" y="582" font-size="7" fill="#222" font-family="Liberation Sans">:0</text>
</svg>
<!-- watermark logo bottom right -->
<svg class="a" style="left:935px;top:540px" width="145" height="45" viewBox="935 540 145 45">
 <path d="M941,556.5 L957,547 L967,550.5 L967,585 L944,585 Z" fill="#4fc0e6" opacity=".6"/>
 <path d="M948,553 L957,548.5 L965,551 L965,585 L948,585 Z" fill="#6fd0ee" opacity=".5"/>
 <path d="M945,566 L950,560 L954,585 L945,585 Z" fill="#a8e6a0" opacity=".45"/>
 <path d="M966,557 C975,555 983,558 984,566 C985,570 988,570 990,567 C990,572 986,575 982,574 L979,585 L966,585 Z" fill="#8fd0e4" opacity=".7"/>
 <text x="990" y="571.5" font-size="14" font-weight="bold" fill="#5aa6cc" font-family="Liberation Sans" textLength="83" lengthAdjust="spacingAndGlyphs">TUITUISOFT</text>
 <path d="M990,563.5 L1073,563.5 M990,566.5 L1073,566.5" stroke="#fff" stroke-width=".6" opacity=".6"/>
</svg>
<div class="t" style="left:1061px;top:560px;font-size:9px;color:#333">&rsaquo;</div>
<svg class="a" style="left:1068px;top:553px" width="12" height="8"><path d="M3,2 L6,5 L9,2" fill="none" stroke="#333" stroke-width="1"/></svg>
<div class="a" style="left:14px;top:81px;width:481px;height:446px;background:#f8f8f8;box-shadow:0 0 4px 1px rgba(0,0,0,.45)"></div>
<div class="a" style="left:14px;top:81px;width:481px;height:17px;background:#fff"></div>
<svg class="a" style="left:14px;top:81px" width="20" height="17" viewBox="14 81 20 17"><defs><linearGradient id="rg2" x1="0" y1="0" x2="1" y2="1"><stop offset="0" stop-color="#0d3f8f"/><stop offset=".6" stop-color="#1f62b8"/><stop offset="1" stop-color="#5aa8e8"/></linearGradient></defs><g transform="translate(17.6,83.2) scale(0.56)"><path fill-rule="evenodd" fill="url(#rg2)" d="M4.3,3.5 L11.5,3.5 C14.8,3.5 15.8,5.6 15.8,7.8 C15.8,10 14.8,11.3 13.2,11.9 L16.3,18 L12.4,18 L9.9,12.6 L7.9,12.6 L7.9,18 L4.3,18 Z M7.9,6.3 L11,6.3 C12,6.3 12.3,7 12.3,7.9 C12.3,8.8 12,9.7 11,9.7 L7.9,9.7 Z"/></g></svg>
<div class="t" style="left:31px;top:85.5px;font-size:7.3px;color:#9a9a9a">Dynamo</div>
<div class="a" style="left:428px;top:89px;width:6px;height:1px;background:#888"></div>
<div class="a" style="left:453px;top:86px;width:6px;height:6px;border:1px solid #888"></div>
<svg class="a" style="left:478px;top:85.5px" width="8" height="8"><path d="M1,1 L7,7 M7,1 L1,7" stroke="#888" stroke-width=".9"/></svg>
<div class="a" style="left:14px;top:98px;width:481px;height:33px;background:#363636"></div>
<div class="a" style="left:14px;top:98px;width:481px;height:1px;background:#222"></div>
<div class="a" style="left:14px;top:113px;width:481px;height:1px;background:#3b3b3b"></div>
<svg class="a" style="left:14px;top:98px" width="481" height="43" viewBox="14 98 481 43"><text x="24" y="108" font-size="6.6" fill="#bdbdbd">文件</text><text x="55" y="108" font-size="6.6" fill="#bdbdbd">编辑</text><text x="85.5" y="108" font-size="6.6" fill="#bdbdbd">视图</text><text x="116" y="108" font-size="6.6" fill="#bdbdbd">软件包</text><text x="154" y="108" font-size="6.6" fill="#bdbdbd">设置</text><text x="184.5" y="108" font-size="6.6" fill="#bdbdbd">帮助</text><circle cx="217" cy="105.2" r="3.6" fill="#e8e8e8"/><rect x="216.4" y="102.6" width="1.2" height="3.2" fill="#333"/><rect x="216.4" y="106.5" width="1.2" height="1" fill="#333"/><circle cx="225.5" cy="105.2" r="3.6" fill="#6fcf6f"/><text x="223.6" y="107.5" font-size="5" fill="#fff">0</text><path d="M24,116 L29.5,116 L32,118.5 L32,125.5 L24,125.5 Z" fill="#8c8c8c"/><path d="M46,119 L49,117 L55,117 L55,125 L46,125 Z" fill="#8c8c8c"/><path d="M48,116 L54,116 L54,118" fill="none" stroke="#8c8c8c"/><rect x="70" y="116.3" width="8" height="9" fill="none" stroke="#8c8c8c" stroke-width="1.1"/><path d="M70,120.8 L78,120.8" stroke="#8c8c8c" stroke-width="1.1"/><path d="M102,124 C101,120 98,118.5 95,118.7 L95,117 L91.8,120 L95,122.5 L95,121 C97,121 99.5,122 102,124 Z" fill="#8c8c8c"/><path d="M114,124 C115,120 118,118.5 121,118.7 L121,117 L124.2,120 L121,122.5 L121,121 C119,121 116.5,122 114,124 Z" fill="#555"/><path d="M448,125 C445,125 444.5,121 447.5,120.5 C447.5,117 452,116 453.5,118.5 C455,116.5 459,117.5 458.5,120.5 C461.5,121 461,125 458,125 Z" fill="#b5e61d" stroke="#222" stroke-width=".6"/><path d="M453,119.5 L453,123 M451.5,121.8 L453,123.4 L454.5,121.8" stroke="#222" stroke-width="1" fill="none"/><rect x="476" y="118" width="10" height="7" rx="1" fill="#8c8c8c"/><rect x="478.5" y="116.8" width="4" height="2" fill="#8c8c8c"/><circle cx="481" cy="121.5" r="1.8" fill="#353535"/></svg>
<div class="a" style="left:14px;top:130.5px;width:481px;height:10.5px;background:#212121;border-bottom:1px solid #0c0c0c"></div>
<div class="a" style="left:14px;top:130.5px;width:141px;height:10.5px;background:#353535"></div>
<div class="t" style="left:19.5px;top:131.8px;font-size:7.6px;color:#d4d4d4">pts2solids.dyn*</div>
<svg class="a" style="left:146px;top:132px" width="8" height="8"><path d="M1.5,1.5 L6.5,6.5 M6.5,1.5 L1.5,6.5" stroke="#777" stroke-width=".8"/></svg>
<svg class="a" style="left:486px;top:132px" width="8" height="8"><path d="M1,1.5 L7,1.5 M1,3.5 L7,3.5 M1,5.5 L7,5.5" stroke="#777" stroke-width=".9"/></svg>
<div class="a" style="left:14px;top:500px;width:481px;height:27px;background:linear-gradient(#1f1f1f,#151515)"></div>
<div class="a" style="left:16.5px;top:503.5px;width:67.5px;height:21.5px;background:#282828"></div>
<div class="t" style="left:22px;top:510.5px;font-size:7px;color:#bbb">手动</div>
<div class="a" style="left:74px;top:513px;width:0;height:0;border-left:2.5px solid transparent;border-right:2.5px solid transparent;border-top:2.5px solid #bbb"></div>
<div class="a" style="left:86px;top:503.5px;width:56.5px;height:21.5px;background:#333"></div>
<div class="t" style="left:106px;top:510.5px;font-size:7px;color:#ccc">运行</div>
<div class="t" style="left:200.5px;top:511px;font-size:6.5px;color:#8a8a8a;font-style:italic">运行完成。</div>
<svg class="a" style="left:487px;top:519px" width="8" height="8"><path d="M7,2 L2,7 M7,4.5 L4.5,7 M7,6.5 L6.5,7" stroke="#777" stroke-width=".7"/></svg>
<svg class="a" style="left:14px;top:141px" width="481" height="359" viewBox="14 141 481 359"><defs><clipPath id="cv"><rect x="15" y="141" width="478.5" height="359"/></clipPath></defs><rect x="14" y="141" width="481" height="359" fill="#f8f8f8"/><g clip-path="url(#cv)" font-family="Liberation Sans">
<g stroke-linejoin="round">
<path d="M150,250 L240,204.4 L305,226 L392,271 L421,291 L409,354 L395,381 L371,392.4 L353,420.6 L320,395 L223,334 L199,311 L160,268 Z" fill="#e8e8e8" stroke="#a8a8a8" stroke-width=".7"/>
<path d="M150,250 L240,204.4 L305,226 L392,271 L421,291 L409,354 L395,381 L371,392.4 L190,282 L160,262 Z" fill="#eeeeee" stroke="#b4b4b4" stroke-width=".6"/>
<path d="M190,282 L371,392.4 L353,420.6 L320,395 L223,334 L199,311 Z" fill="#e0e0e0" stroke="#a0a0a0" stroke-width=".6"/>
<path d="M371,392.4 L395,381 L380,402 L353,420.6 Z" fill="#e6e6e6" stroke="#aaaaaa" stroke-width=".5"/>
<path d="M191.9,286.3 L369.0,395.5" stroke="#c4c4c4" stroke-width="0.5" fill="none"/>
<path d="M193.8,290.7 L367.0,398.7" stroke="#9a9a9a" stroke-width="0.6" fill="none"/>
<path d="M195.7,295.0 L365.0,401.8" stroke="#c4c4c4" stroke-width="0.5" fill="none"/>
<path d="M197.6,299.3 L363.0,404.9" stroke="#c4c4c4" stroke-width="0.5" fill="none"/>
<path d="M199.4,303.7 L361.0,408.1" stroke="#9a9a9a" stroke-width="0.6" fill="none"/>
<path d="M201.3,308.0 L359.0,411.2" stroke="#c4c4c4" stroke-width="0.5" fill="none"/>
<path d="M203.2,312.3 L357.0,414.3" stroke="#9a9a9a" stroke-width="0.6" fill="none"/>
<path d="M205.1,316.7 L355.0,417.5" stroke="#c4c4c4" stroke-width="0.5" fill="none"/>
<path d="M199,244 L217.7,227 L242,212.6 L293.7,229 L380,288.5 L400.4,305 L383,344.5 L351.6,359 L273,325.5 Z" fill="none" stroke="#9c9c9c" stroke-width=".7"/>
<path d="M233,210 L197.8,243 M173,233 L240,204.4" fill="none" stroke="#aaaaaa" stroke-width=".6"/>
<path d="M215,250 L290,232 L370,285 L345,330 L280,318 Z" fill="#f3f3f3" opacity=".7"/>
</g>
<rect x="322.5" y="157.3" width="71.5" height="38.2" fill="#d8d3ce" stroke="#6a8aa6" stroke-width="1"/><rect x="322.5" y="157.3" width="71.5" height="8.2" fill="#3d3d3d"/><text x="358.2" y="163.1" font-size="4.8" font-weight="bold" fill="#fff" text-anchor="middle" textLength="59.5" lengthAdjust="spacingAndGlyphs">Springs.DirectShape.ByGeometry</text><rect x="322.5" y="165.9" width="35.7" height="6.7" fill="#ebe8e5"/><text x="323.5" y="171.0" font-size="4.8" fill="#7a7a7a">geometry</text><path d="M354.7,167.5 L356.7,169.2 L354.7,171.0" fill="none" stroke="#444" stroke-width="1"/><rect x="322.5" y="173.4" width="35.7" height="6.7" fill="#ebe8e5"/><text x="323.5" y="178.5" font-size="4.8" fill="#7a7a7a">category</text><path d="M354.7,175.0 L356.7,176.8 L354.7,178.5" fill="none" stroke="#444" stroke-width="1"/><rect x="322.5" y="180.9" width="35.7" height="6.7" fill="#ebe8e5"/><text x="323.5" y="186.0" font-size="4.8" fill="#7a7a7a">name</text><path d="M354.7,182.5 L356.7,184.2 L354.7,186.0" fill="none" stroke="#444" stroke-width="1"/><rect x="369.7" y="165.9" width="24.3" height="6.7" fill="#ebe8e5"/><text x="393" y="171.0" font-size="4.8" fill="#7a7a7a" text-anchor="end">DirectShape</text>
<rect x="305.5" y="218.5" width="83.1" height="67.5" fill="#d8d3ce" stroke="#b9b4af" stroke-width="0.5"/><rect x="305.5" y="218.5" width="83.1" height="8.5" fill="#ccc7c1"/><text x="347.1" y="224.4" font-size="4.8" font-weight="bold" fill="#4a4a4a" text-anchor="middle" textLength="65" lengthAdjust="spacingAndGlyphs">Springs.FamilyInstance.ByGeometry</text><rect x="305.5" y="227.4" width="53.5" height="6.5" fill="#ebe8e5"/><text x="306.5" y="232.3" font-size="4.8" fill="#7a7a7a">geometry</text><path d="M355.5,229.0 L357.5,230.7 L355.5,232.3" fill="none" stroke="#444" stroke-width="1"/><rect x="305.5" y="234.8" width="53.5" height="6.5" fill="#ebe8e5"/><text x="306.5" y="239.7" font-size="4.8" fill="#7a7a7a">familyTemplatePath</text><path d="M355.5,236.3 L357.5,238.0 L355.5,239.7" fill="none" stroke="#444" stroke-width="1"/><rect x="305.5" y="242.1" width="53.5" height="6.5" fill="#ebe8e5"/><text x="306.5" y="247.0" font-size="4.8" fill="#7a7a7a">familyName</text><path d="M355.5,243.7 L357.5,245.4 L355.5,247.0" fill="none" stroke="#444" stroke-width="1"/><rect x="305.5" y="249.5" width="53.5" height="6.5" fill="#ebe8e5"/><text x="306.5" y="254.4" font-size="4.8" fill="#7a7a7a">category</text><path d="M355.5,251.1 L357.5,252.7 L355.5,254.4" fill="none" stroke="#444" stroke-width="1"/><rect x="305.5" y="256.8" width="53.5" height="6.5" fill="#ebe8e5"/><text x="306.5" y="261.8" font-size="4.8" fill="#7a7a7a">materialName</text><path d="M355.5,258.4 L357.5,260.1 L355.5,261.8" fill="none" stroke="#444" stroke-width="1"/><rect x="305.5" y="264.1" width="53.5" height="6.5" fill="#ebe8e5"/><text x="306.5" y="269.1" font-size="4.8" fill="#7a7a7a">isVoid</text><path d="M355.5,265.8 L357.5,267.4 L355.5,269.1" fill="none" stroke="#444" stroke-width="1"/><rect x="305.5" y="271.5" width="53.5" height="6.5" fill="#ebe8e5"/><text x="306.5" y="276.5" font-size="4.8" fill="#7a7a7a">subcategoryName</text><path d="M355.5,273.1 L357.5,274.8 L355.5,276.5" fill="none" stroke="#444" stroke-width="1"/><rect x="371.0" y="227.4" width="17.6" height="6.5" fill="#ebe8e5"/><text x="387.6" y="232.3" font-size="4.8" fill="#7a7a7a" text-anchor="end">instance</text><rect x="371.0" y="234.8" width="17.6" height="6.5" fill="#ebe8e5"/><text x="387.6" y="239.7" font-size="4.8" fill="#7a7a7a" text-anchor="end">family</text>
<rect x="149" y="238.5" width="34.0" height="21.5" fill="#d8d3ce" stroke="#b9b4af" stroke-width="0.5"/><rect x="149" y="238.5" width="34.0" height="7" fill="#4d4d4d"/><text x="166.0" y="243.7" font-size="4.8" font-weight="bold" fill="#fff" text-anchor="middle" textLength="15.5" lengthAdjust="spacingAndGlyphs">File Path</text>
<rect x="149.3" y="245.6" width="33.4" height="6.4" fill="#ebe8e5"/><text x="163" y="250.3" font-size="4.5" fill="#777" text-anchor="middle">浏览...</text><path d="M179.5,247.3 L181,248.8 L179.5,250.3" fill="none" stroke="#666" stroke-width=".7"/><rect x="149.3" y="252.5" width="33.4" height="6" fill="#d0ccc7"/><text x="150.5" y="257" font-size="4" fill="#888">..\simple\pts...</text>
<rect x="132" y="269" width="49.5" height="21.5" fill="#d8d3ce" stroke="#b9b4af" stroke-width="0.5"/><rect x="132" y="269" width="49.5" height="7" fill="#4d4d4d"/><text x="156.8" y="274.2" font-size="4.8" font-weight="bold" fill="#fff" text-anchor="middle" textLength="20" lengthAdjust="spacingAndGlyphs">Code Block</text>
<rect x="132.3" y="276.3" width="49" height="6.5" fill="#ebe8e5"/><rect x="133" y="276.8" width="11.5" height="5.5" fill="#e4e1dd"/><text x="133.5" y="281.2" font-size="4" fill="#777" textLength="10" lengthAdjust="spacingAndGlyphs">datum</text><rect x="145.5" y="276.8" width="12.5" height="5.5" fill="#e4e1dd"/><text x="146" y="281.2" font-size="4" fill="#666" textLength="11" lengthAdjust="spacingAndGlyphs">datas</text><rect x="159" y="276.8" width="12" height="5.5" fill="#f4f6fa" stroke="#9aa" stroke-width=".3"/><text x="159.8" y="281" font-size="3.8" fill="#5a7fc0" textLength="10" lengthAdjust="spacingAndGlyphs">[1...8]</text><rect x="172" y="276.8" width="3.5" height="5.5" fill="#e4e1dd"/><text x="173" y="281.2" font-size="4" fill="#777">1</text><rect x="176.5" y="276.8" width="4.5" height="5.5" fill="#e4e1dd"/><text x="177.3" y="281.2" font-size="4" fill="#777">&gt;</text>
<rect x="188.6" y="287.7" width="46.7" height="21.3" fill="#d8d3ce" stroke="#b9b4af" stroke-width="0.5"/><rect x="188.6" y="287.7" width="46.7" height="7.3" fill="#4d4d4d"/><text x="211.9" y="293.0" font-size="4.8" font-weight="bold" fill="#fff" text-anchor="middle" textLength="19" lengthAdjust="spacingAndGlyphs">Categories</text>
<rect x="189" y="295.4" width="28.5" height="6.5" fill="#ebe8e5"/><text x="190" y="300.2" font-size="4.4" fill="#888">未绑定</text><path d="M213.5,298 L215.5,298 L214.5,299.3 Z" fill="#888"/><rect x="218.5" y="295.4" width="16.5" height="6.5" fill="#ebe8e5"/><text x="234.8" y="300.3" font-size="4.6" fill="#777" text-anchor="end">Category</text>
<rect x="462" y="272" width="58.0" height="29.0" fill="#d8d3ce" stroke="#b9b4af" stroke-width="0.5"/><rect x="462" y="272" width="58.0" height="7.2" fill="#4d4d4d"/><text x="467" y="277.3" font-size="4.8" font-weight="bold" fill="#fff" textLength="55" lengthAdjust="spacingAndGlyphs">Element.OverrideColor</text><rect x="462" y="279.6" width="30.5" height="6.5" fill="#ebe8e5"/><text x="463" y="284.4" font-size="4.8" fill="#7a7a7a">element</text><path d="M489.0,281.2 L491.0,282.8 L489.0,284.4" fill="none" stroke="#444" stroke-width="1"/><rect x="462" y="286.8" width="30.5" height="6.5" fill="#ebe8e5"/><text x="463" y="291.7" font-size="4.8" fill="#7a7a7a">color</text><path d="M489.0,288.4 L491.0,290.1 L489.0,291.7" fill="none" stroke="#444" stroke-width="1"/>
<rect x="384" y="309" width="44.5" height="44.0" fill="#d8d3ce" stroke="#b9b4af" stroke-width="0.5"/><rect x="384" y="309" width="44.5" height="7.5" fill="#4d4d4d"/><text x="406.2" y="314.4" font-size="4.8" font-weight="bold" fill="#fff" text-anchor="middle" textLength="27" lengthAdjust="spacingAndGlyphs">Color.ByARGB</text><rect x="384" y="316.9" width="21.8" height="6.5" fill="#ebe8e5"/><text x="385" y="321.8" font-size="4.8" fill="#7a7a7a">a</text><path d="M402.3,318.5 L404.3,320.1 L402.3,321.8" fill="none" stroke="#444" stroke-width="1"/><rect x="384" y="324.2" width="21.8" height="6.5" fill="#ebe8e5"/><text x="385" y="329.1" font-size="4.8" fill="#7a7a7a">r</text><path d="M402.3,325.8 L404.3,327.4 L402.3,329.1" fill="none" stroke="#444" stroke-width="1"/><rect x="384" y="331.5" width="21.8" height="6.5" fill="#ebe8e5"/><text x="385" y="336.4" font-size="4.8" fill="#7a7a7a">g</text><path d="M402.3,333.1 L404.3,334.8 L402.3,336.4" fill="none" stroke="#444" stroke-width="1"/><rect x="384" y="338.8" width="21.8" height="6.5" fill="#ebe8e5"/><text x="385" y="343.7" font-size="4.8" fill="#7a7a7a">b</text><path d="M402.3,340.4 L404.3,342.0 L402.3,343.7" fill="none" stroke="#444" stroke-width="1"/><rect x="417.4" y="316.9" width="11.1" height="6.5" fill="#ebe8e5"/><text x="427.5" y="321.8" font-size="4.8" fill="#7a7a7a" text-anchor="end">color</text>
<rect x="297" y="328.5" width="39.3" height="22.0" fill="#d8d3ce" stroke="#b9b4af" stroke-width="0.5"/><rect x="297" y="328.5" width="39.3" height="7" fill="#4d4d4d"/><text x="316.6" y="333.7" font-size="4.8" font-weight="bold" fill="#fff" text-anchor="middle" textLength="19.6" lengthAdjust="spacingAndGlyphs">Code Block</text>
<rect x="297.3" y="335.6" width="38.7" height="6.6" fill="#f2f0ee"/><text x="297.8" y="340.5" font-size="4.6" fill="#3a6fc0" font-family="Liberation Mono">255..100..0;</text><text x="333" y="340.5" font-size="4.6" fill="#777">&gt;</text>
<rect x="-10" y="444.4" width="81.5" height="30.1" fill="#d8d3ce" stroke="#b9b4af" stroke-width="0.5"/><rect x="-10" y="444.4" width="81.5" height="7.6" fill="#4d4d4d"/><text x="13" y="449.9" font-size="4.8" font-weight="bold" fill="#fff" textLength="48.5" lengthAdjust="spacingAndGlyphs">[0] Geometry.SplitByTools</text><rect x="-10" y="452.4" width="50.7" height="6.7" fill="#ebe8e5"/><text x="-9" y="457.5" font-size="4.8" fill="#7a7a7a"></text><path d="M37.2,454.0 L39.2,455.8 L37.2,457.5" fill="none" stroke="#444" stroke-width="1"/><rect x="-10" y="459.9" width="50.7" height="6.7" fill="#ebe8e5"/><text x="-9" y="465.0" font-size="4.8" fill="#7a7a7a"></text><path d="M37.2,461.5 L39.2,463.2 L37.2,465.0" fill="none" stroke="#444" stroke-width="1"/><rect x="52.2" y="452.4" width="19.3" height="6.7" fill="#ebe8e5"/><text x="70.5" y="457.5" font-size="4.8" fill="#7a7a7a" text-anchor="end">geometry</text>
<rect x="104" y="434" width="46.6" height="22.7" fill="#d8d3ce" stroke="#b9b4af" stroke-width="0.5"/><rect x="104" y="434" width="46.6" height="7.2" fill="#4d4d4d"/><text x="127.3" y="439.3" font-size="4.8" font-weight="bold" fill="#fff" text-anchor="middle" textLength="23.7" lengthAdjust="spacingAndGlyphs">List.FirstItem</text><rect x="104" y="441.6" width="26.0" height="6.8" fill="#ebe8e5"/><text x="105" y="446.8" font-size="4.8" fill="#7a7a7a">list</text><path d="M126.5,443.2 L128.5,445.0 L126.5,446.8" fill="none" stroke="#444" stroke-width="1"/><rect x="140.0" y="441.6" width="10.6" height="6.8" fill="#ebe8e5"/><text x="149.6" y="446.8" font-size="4.8" fill="#7a7a7a" text-anchor="end">item</text>
<rect x="104.7" y="464.4" width="44.8" height="22.3" fill="#d8d3ce" stroke="#b9b4af" stroke-width="0.5"/><rect x="104.7" y="464.4" width="44.8" height="7.2" fill="#4d4d4d"/><text x="127.1" y="469.7" font-size="4.8" font-weight="bold" fill="#fff" text-anchor="middle" textLength="23.4" lengthAdjust="spacingAndGlyphs">List.LastItem</text><rect x="104.7" y="472.0" width="26.0" height="6.8" fill="#ebe8e5"/><text x="105.7" y="477.2" font-size="4.8" fill="#7a7a7a">list</text><path d="M127.2,473.6 L129.2,475.4 L127.2,477.2" fill="none" stroke="#444" stroke-width="1"/><rect x="138.9" y="472.0" width="10.6" height="6.8" fill="#ebe8e5"/><text x="148.5" y="477.2" font-size="4.8" fill="#7a7a7a" text-anchor="end">last</text>
<text x="4.5" y="457.5" font-size="4.8" fill="#7a7a7a">geometry</text>
<rect x="129.4" y="294" width="54.6" height="39.4" fill="#fff" stroke="#e2e2e2" stroke-width=".6"/><text x="135" y="298.5" font-size="3" fill="#aaa">List</text><path d="M134.5,299 L134.5,326" stroke="#c8c8c8" stroke-width=".5"/>
<rect x="137" y="300.0" width="4.5" height="3" fill="#ddd"/><text x="143" y="302.5" font-size="3.2" fill="#aaa">楼板</text>
<rect x="137" y="304.3" width="4.5" height="3" fill="#ddd"/><text x="143" y="306.8" font-size="3.2" fill="#aaa">常规模型</text>
<rect x="137" y="308.6" width="4.5" height="3" fill="#ddd"/><text x="143" y="311.1" font-size="3.2" fill="#aaa">环境构件</text>
<rect x="137" y="312.9" width="4.5" height="3" fill="#ddd"/><text x="143" y="315.4" font-size="3.2" fill="#aaa">场地</text>
<rect x="137" y="317.2" width="4.5" height="3" fill="#ddd"/><text x="143" y="319.7" font-size="3.2" fill="#aaa">体量与立面模型</text>
<rect x="137" y="321.5" width="4.5" height="3" fill="#ddd"/><text x="143" y="324.0" font-size="3.2" fill="#aaa">体量和立面模型</text>
<text x="131" y="331" font-size="3" fill="#888">@L2 @L1</text><text x="179" y="331" font-size="3" fill="#888">{6}</text>
<path d="M43,120 L41,141 C38,175 24,210 14,236 L0,268" fill="none" stroke="#4a4a4a" stroke-width="1.1"/>
<path d="M-80,276 C15.4,276 36.6,279.6 132,279.6" fill="none" stroke="#4a4a4a" stroke-width="1.1"/>
<path d="M183,249.5 C238.3,249.5 250.2,238.5 305.5,238.5" fill="none" stroke="#4a4a4a" stroke-width="1.1"/>
<path d="M336.3,338.8 C357.8,338.8 362.5,334.9 384,334.9" fill="none" stroke="#4a4a4a" stroke-width="1.1"/>
<path d="M336.3,338.8 C357.8,338.8 362.5,342.1 384,342.1" fill="none" stroke="#4a4a4a" stroke-width="1.1"/>
<path d="M428.5,320.3 C448.7,320.3 441.8,290.4 462,290.4" fill="none" stroke="#4a4a4a" stroke-width="1.1"/>
<path d="M71.5,456.6 C86.9,456.6 88.6,445.6 104,445.6" fill="none" stroke="#4a4a4a" stroke-width="1.1"/>
<path d="M71.5,456.6 C88.8,456.6 87.4,476 104.7,476" fill="none" stroke="#4a4a4a" stroke-width="1.1"/>
<path d="M394.4,169.6 C453.9,169.6 402.5,283.2 462,283.2" fill="none" stroke="#5498d2" stroke-width="1.2"/>
<path d="M149.5,476 C307.8,476 164.2,169.6 322.5,169.6" fill="none" stroke="#5498d2" stroke-width="1.2"/>
<path d="M181.5,279.6 C258.1,279.6 245.9,184.4 322.5,184.4" fill="none" stroke="#5498d2" stroke-width="1.2"/>
<path d="M235.5,299 C302.9,299 255.1,177 322.5,177" fill="none" stroke="#5498d2" stroke-width="1.2"/>
<rect x="431.5" y="147.8" width="59.2" height="14.2" rx="1" fill="#fff" stroke="#e4e4e4" stroke-width=".6"/><path d="M461,149 L461,161" stroke="#e4e4e4" stroke-width=".6"/>
<circle cx="440" cy="156" r="3.4" fill="none" stroke="#666" stroke-width=".6"/><path d="M438,158 L442,151.5 L446,158 Z" fill="none" stroke="#666" stroke-width=".6"/><rect x="447.5" y="152" width="5.5" height="6" fill="none" stroke="#666" stroke-width=".6"/><path d="M447.5,152 L449,150.5 L454.5,150.5 L453,152 M454.5,150.5 L454.5,156.5 L453,158" fill="none" stroke="#666" stroke-width=".6"/>
<rect x="466" y="151" width="6.5" height="4" fill="#4aa3e0" stroke="#2a73b0" stroke-width=".4"/><rect x="480" y="153" width="8.5" height="4.5" fill="#4aa3e0" stroke="#2a73b0" stroke-width=".4"/><rect x="469" y="157.5" width="6.5" height="3" fill="#9ccbee"/><path d="M472.5,153 C476,153 476,155 480,155" fill="none" stroke="#4aa3e0" stroke-width=".6"/>
<rect x="478" y="168" width="13" height="40.5" rx="1" fill="#fff" stroke="#e4e4e4" stroke-width=".6"/><rect x="478" y="213" width="13" height="13.5" rx="1" fill="#fff" stroke="#e4e4e4" stroke-width=".6"/>
<path d="M481.5,174 L481.5,172 L483.5,172 M486.5,172 L488.5,172 L488.5,174 M488.5,177 L488.5,179 L486.5,179 M483.5,179 L481.5,179 L481.5,177" fill="none" stroke="#555" stroke-width=".7"/>
<path d="M484.5,185 L484.5,191 M481.5,188 L487.5,188 M481.5,201 L487.5,201" stroke="#555" stroke-width=".8"/>
<path d="M484.5,215.5 L484.5,224 M480.5,219.8 L488.5,219.8" stroke="#555" stroke-width=".8"/><path d="M483.3,216.8 L484.5,215.3 L485.7,216.8 M483.3,222.8 L484.5,224.3 L485.7,222.8 M481.8,218.6 L480.3,219.8 L481.8,221 M487.2,218.6 L488.7,219.8 L487.2,221" fill="none" stroke="#555" stroke-width=".6"/>
<rect x="15" y="169" width="10.7" height="28.8" fill="#1e1e1e"/><path d="M18,174 L18,180 M19.5,174 L22.5,177 L19.5,180 Z" fill="none" stroke="#999" stroke-width=".6"/><text x="17.2" y="191" font-size="6" fill="#999">库</text>
</g><path d="M14.5,141 L14.5,500" stroke="#9a9a9a" stroke-width="1"/><path d="M493.8,141 L493.8,500" stroke="#ffffff" stroke-width="1.4"/></svg>
</body></html>
